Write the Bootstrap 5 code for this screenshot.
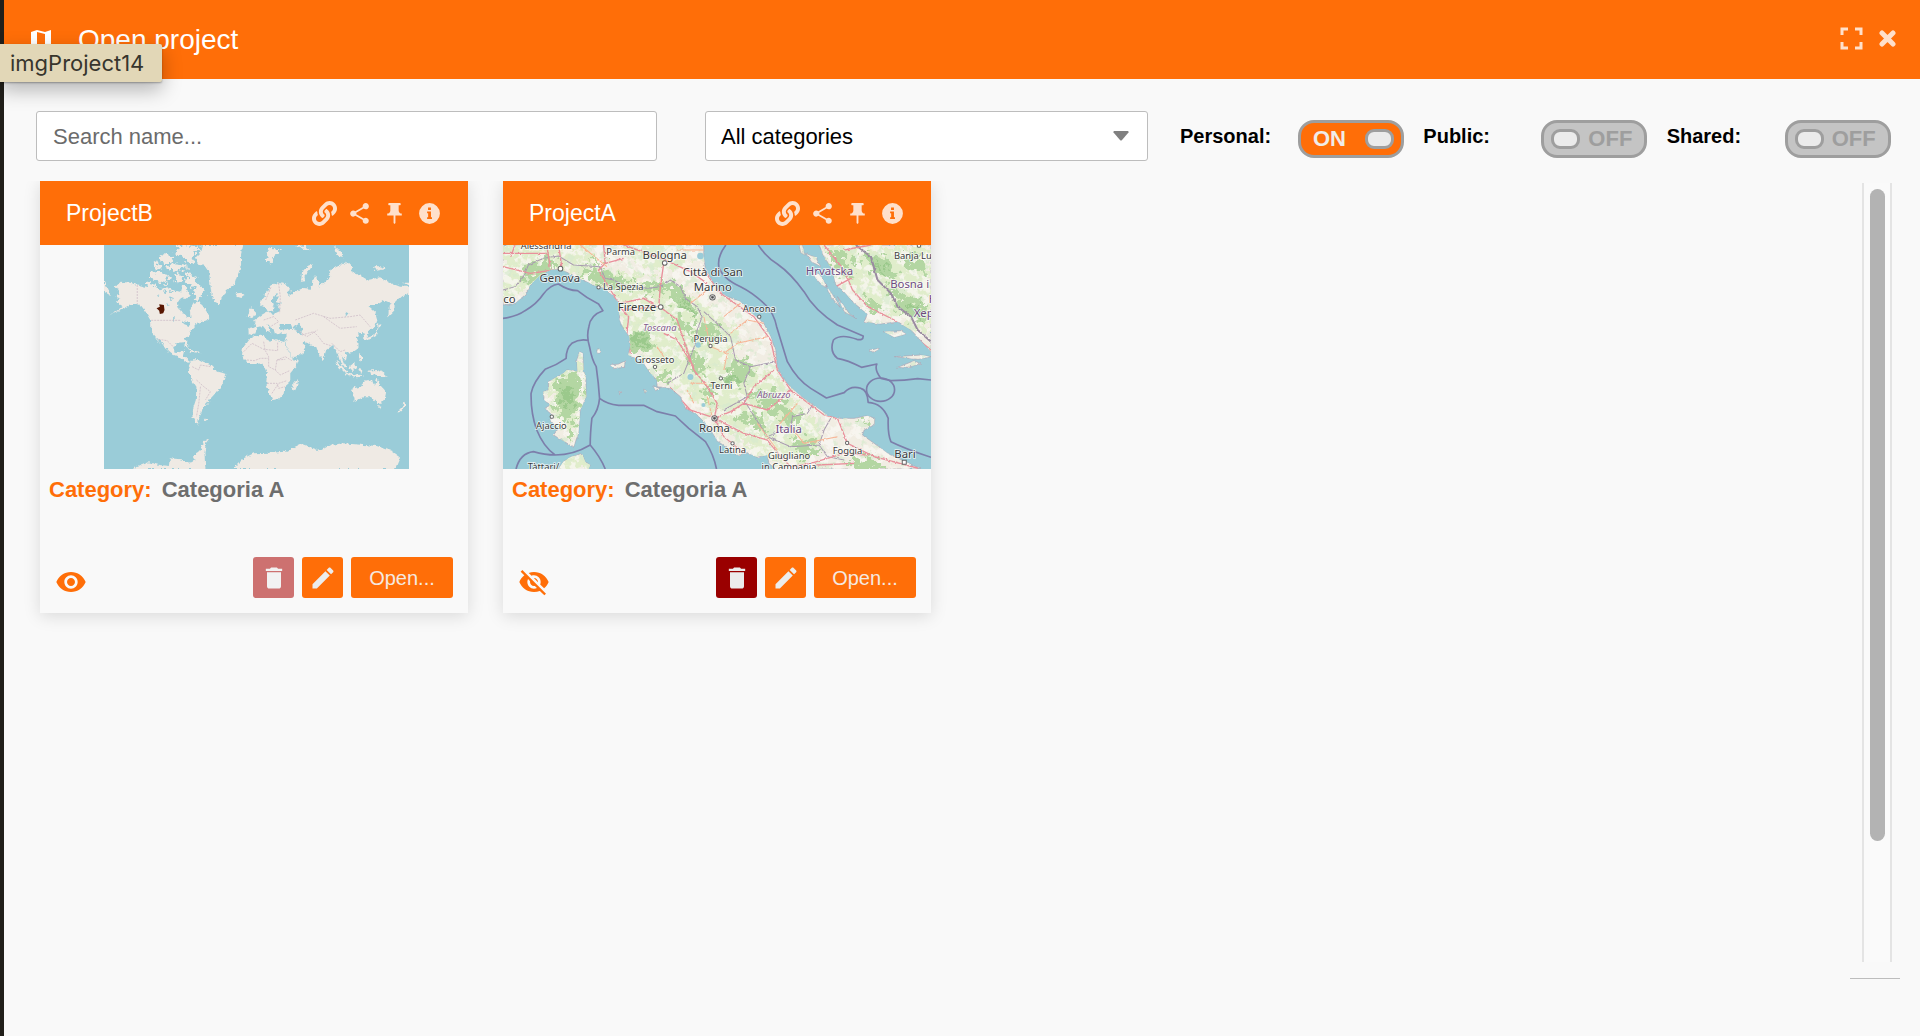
<!DOCTYPE html>
<html lang="en">
<head>
<meta charset="utf-8">
<meta name="viewport" content="width=device-width, initial-scale=1">
<title>Open project</title>
<link href="https://cdn.jsdelivr.net/npm/bootstrap@5.3.0/dist/css/bootstrap.min.css" rel="stylesheet">
<style>
:root{--brand:#ff6e08;--paper:#f9f9f9;--tint:#ffe0cb;--line:#bdbdbd}
body{font-family:"Liberation Sans",Arial,sans-serif;background:var(--paper);color:#000;border-left:4px solid #211f1a}
.dialog-head{background:var(--brand);height:79px;padding:0 24px 2px 27px;color:#fff}
.dialog-head h1{font-size:28px;line-height:32px;font-weight:400;margin-left:27px;padding-top:2px}
.plain-btn{border:0;background:none;padding:0;color:var(--tint);line-height:0}
.title-tip{left:0;top:44px;height:38px;width:162px;padding:0 10px;background:#e2d7b7;color:#37352d;font:400 22px/38px Inter,sans-serif;border-radius:0 2px 2px 0;box-shadow:0 8px 20px rgba(0,0,0,.28),0 1px 2px rgba(0,0,0,.3);white-space:nowrap;z-index:5}
.filters{padding:32px 10px 0 32px}
.filters .form-control,.filters .form-select{height:50px;font-size:22px;border:1px solid var(--line);border-radius:3px;padding:0 16px;color:#000;background-color:#fff}
.filters .form-control{padding-top:2px}
.filters .form-select{padding-left:15px}
.form-control::placeholder{color:#6b6b6b}
.filters .form-select{background-image:url("data:image/svg+xml,%3csvg xmlns='http://www.w3.org/2000/svg' viewBox='0 0 16 10'%3e%3cpath fill='%23808080' d='M1 0h14q1 .5.5 1.500L9 9q-1 1-2 0L.5 1.500Q0 .5 1 0z'/%3e%3c/svg%3e");background-size:16px 10px;background-position:right 18px center}
.f-search{flex:621 1 0;margin-right:48px}
.f-select{flex:443 1 0;margin-right:32px}
.f-toggles{flex:730 1 0}
.switch-item{flex:1 1 0;cursor:pointer}
.switch-name{width:118px;font-size:20px;line-height:24px;font-weight:700}
.pill{width:106px;height:38px;margin-top:6px;border:3px solid #9e9e9e;border-radius:16px;background:#c4c4c4;color:#9e9e9e;font-size:22px;line-height:24px;font-weight:700;padding:0 12px 0 7px;display:flex;align-items:center;justify-content:space-between;flex-direction:row-reverse}
.pill i{width:29px;height:20px;border:3px solid #9e9e9e;border-radius:9px;background:#ebebeb}
.pill .txt-on{display:none}
input:checked+.pill{background:var(--brand);color:#f0ece9;flex-direction:row;padding:0 7px 0 12px}
input:checked+.pill .txt-on{display:inline}
input:checked+.pill .txt-off{display:none}
input:focus-visible+.pill{outline:2px solid #333}
.results{margin-top:20px;overflow:hidden;padding-left:36px}
.card-list{gap:35px}
.project{width:428px;background:var(--paper);box-shadow:0 3px 16px rgba(0,0,0,.13)}
.project-head{height:64px;padding:0 26px;background:var(--brand);color:#fff}
.project-head h2{font-size:23px;line-height:28px;font-weight:400}
.icon-row{gap:10px}
.project-map{height:224px}
.project-map svg{display:block;height:224px}
.project-cat{font-size:22px;line-height:28px;font-weight:700;padding:7px 9px 5px;color:#6e6e6e;gap:10px}
.project-cat b{color:var(--brand)}
.project-foot{margin-top:48px;padding:0 15px;height:56px}
.project-foot .eye{color:var(--brand);margin-top:9px}
.sq{width:41px;height:41px;border:0;border-radius:3px;padding:0;color:#ececec;background:var(--brand);line-height:0}
.sq-del{background:#9a0000}
.sq-del:disabled{background:#cd7170;color:#f2f2f2}
.btn-open{width:102px;height:41px;border:0;border-radius:3px;background:var(--brand);color:#f5e9e0;font-size:20px;line-height:24px}
.rail{width:50px;margin-right:20px;border-bottom:1px solid var(--line);padding:2px 8px 16px 12px}
.rail-track{border:solid #e4e4e4;border-width:0 2px;background:#fafafa;padding:6px 5px 6px 6px}
.rail-thumb{height:85%;background:#b3b3b3;border-radius:8px}
.bottom-gap{height:57px}
.place text{font-family:"Noto Sans",sans-serif;fill:#3a3a3a;stroke:#fff;stroke-width:5px;stroke-opacity:.75;paint-order:stroke;text-anchor:middle}
.place .t9{font-size:28px}.place .t11{font-size:34px}
.place .region{fill:#835a8c;font-style:italic}.place .nation{fill:#6d4a80}
</style>
<script src="https://cdn.jsdelivr.net/npm/bootstrap@5.3.0/dist/js/bootstrap.bundle.min.js"></script>
</head>
<body class="d-flex flex-column min-vh-100">
<svg width="0" height="0" class="position-absolute" aria-hidden="true">
<symbol id="i-link" viewBox="0 0 512 512"><path d="M326.612 185.391c59.747 59.809 58.927 155.698.36 214.59-.11.12-.24.25-.36.37l-67.2 67.2c-59.27 59.27-155.699 59.262-214.96 0-59.27-59.26-59.27-155.7 0-214.96l37.106-37.106c9.84-9.84 26.786-3.3 27.294 10.606.648 17.722 3.826 35.527 9.69 52.721 1.986 5.822.567 12.262-3.783 16.612l-13.087 13.087c-28.026 28.026-28.905 73.66-1.155 101.96 28.024 28.579 74.086 28.749 102.325.51l67.2-67.19c28.191-28.191 28.073-73.757 0-101.83-3.701-3.694-7.429-6.564-10.341-8.569a16.037 16.037 0 0 1-6.947-12.606c-.396-10.567 3.348-21.456 11.698-29.806l21.054-21.055c5.521-5.521 14.182-6.199 20.584-1.731a152.482 152.482 0 0 1 20.522 17.197zM467.547 44.449c-59.261-59.262-155.69-59.27-214.96 0l-67.2 67.2c-.12.12-.25.25-.36.37-58.566 58.892-59.387 154.781.36 214.59a152.454 152.454 0 0 0 20.521 17.196c6.402 4.468 15.064 3.789 20.584-1.731l21.054-21.055c8.35-8.35 12.094-19.239 11.698-29.806a16.037 16.037 0 0 0-6.947-12.606c-2.912-2.005-6.64-4.875-10.341-8.569-28.073-28.073-28.191-73.639 0-101.83l67.2-67.19c28.239-28.239 74.3-28.069 102.325.51 27.75 28.3 26.872 73.934-1.155 101.96l-13.087 13.087c-4.35 4.35-5.769 10.79-3.783 16.612 5.864 17.194 9.042 34.999 9.69 52.721.509 13.906 17.454 20.446 27.294 10.606l37.106-37.106c59.271-59.259 59.271-155.699.001-214.959z"/></symbol>
<symbol id="i-share" viewBox="0 0 24 24"><path d="M18 16.080c-.76 0-1.440.3-1.960.77L8.910 12.700c.05-.23.09-.46.09-.7s-.04-.47-.09-.7l7.050-4.110c.54.5 1.250.81 2.040.81 1.660 0 3-1.340 3-3s-1.340-3-3-3-3 1.340-3 3c0 .24.04.47.09.7L8.040 9.810C7.500 9.310 6.790 9 6 9c-1.660 0-3 1.340-3 3s1.340 3 3 3c.79 0 1.500-.31 2.040-.81l7.120 4.160c-.05.21-.08.43-.08.65 0 1.610 1.310 2.920 2.920 2.920s2.920-1.310 2.920-2.920-1.310-2.920-2.920-2.920z"/></symbol>
<symbol id="i-pin" viewBox="0 0 24 24"><path d="M16 9V4h1c.55 0 1-.45 1-1s-.45-1-1-1H7c-.55 0-1 .45-1 1s.45 1 1 1h1v5c0 1.660-1.340 3-3 3v2h6.100v7l.9 1 .9-1v-7H19v-2c-1.660 0-3-1.340-3-3z"/></symbol>
<symbol id="i-info" viewBox="0 0 24 24"><path fill-rule="evenodd" d="M12 2a10 10 0 1 0 0 20 10 10 0 0 0 0-20zM10.600 6.200h2.800v2.500h-2.800zM9.700 10h3.700v5.500h1V17.300H9.700v-1.800h1v-3.700h-1z"/></symbol>
<symbol id="i-trash" viewBox="0 0 24 24"><path d="M6 19c0 1.100.9 2 2 2h8c1.100 0 2-.9 2-2V7H6v12zM19 4h-3.500l-1-1h-5l-1 1H5v2h14V4z"/></symbol>
<symbol id="i-edit" viewBox="0 0 24 24"><path d="M3 17.250V21h3.750L17.810 9.940l-3.750-3.750L3 17.250zM20.710 7.040c.39-.39.39-1.020 0-1.410l-2.340-2.340c-.39-.39-1.020-.39-1.410 0l-1.830 1.830 3.750 3.750 1.830-1.830z"/></symbol>
<symbol id="i-eye" viewBox="0 0 24 24"><path d="M12 4.500C7 4.500 2.730 7.610 1 12c1.730 4.390 6 7.500 11 7.500s9.270-3.110 11-7.500c-1.730-4.390-6-7.500-11-7.500zM12 17c-2.760 0-5-2.240-5-5s2.240-5 5-5 5 2.240 5 5-2.240 5-5 5zm0-8c-1.660 0-3 1.340-3 3s1.340 3 3 3 3-1.340 3-3-1.340-3-3-3z"/></symbol>
<symbol id="i-eyeoff" viewBox="0 0 24 24"><path d="M12 7c2.760 0 5 2.240 5 5 0 .65-.13 1.260-.36 1.830l2.920 2.920c1.510-1.260 2.700-2.890 3.430-4.750-1.730-4.390-6-7.500-11-7.500-1.400 0-2.740.25-3.980.7l2.160 2.160C10.740 7.130 11.350 7 12 7zM2 4.270l2.280 2.280.46.46C3.080 8.300 1.780 10.020 1 12c1.730 4.390 6 7.500 11 7.500 1.550 0 3.030-.3 4.380-.84l.42.42L19.730 22 21 20.730 3.270 3 2 4.270zM7.530 9.800l1.550 1.550c-.05.21-.08.43-.08.65 0 1.660 1.340 3 3 3 .22 0 .44-.03.65-.08l1.550 1.550c-.67.33-1.410.53-2.200.53-2.760 0-5-2.240-5-5 0-.79.2-1.530.53-2.200zm4.310-.78l3.150 3.150.02-.16c0-1.660-1.340-3-3-3l-.17.01z"/></symbol>
</svg>

<header class="dialog-head d-flex align-items-center">
  <svg width="20" height="20" viewBox="0 0 20 20" fill="#fff" aria-hidden="true"><path d="M0 3l6-2v16l-6 2zM14 3l6-2v16l-6 2z"/><path d="M6 1l8 2v2L6 3zM6 15l8 2v2l-8-2z"/></svg>
  <h1 class="mb-0 me-auto">Open project</h1>
  <button class="plain-btn me-3" type="button" aria-label="Full screen"><svg width="23" height="23" viewBox="0 0 23 23" fill="none" stroke="currentColor" stroke-width="3"><path d="M2 8V2h6M15 2h6v6M21 15v6h-6M8 21H2v-6"/></svg></button>
  <button class="plain-btn" type="button" aria-label="Close"><svg width="17" height="17" viewBox="0 0 17 17" fill="none" stroke="currentColor" stroke-width="5" stroke-linecap="round"><path d="M3 3l11 11M14 3L3 14"/></svg></button>
</header>
<div class="title-tip position-absolute" role="tooltip">imgProject14</div>

<form class="filters d-flex align-items-center">
  <div class="f-search"><input class="form-control" type="text" placeholder="Search name..." aria-label="Search name"></div>
  <div class="f-select"><select class="form-select" aria-label="Category"><option>All categories</option><option>Categoria A</option></select></div>
  <div class="f-toggles d-flex">
    <label class="switch-item d-flex align-items-center"><span class="switch-name">Personal:</span><input class="visually-hidden" type="checkbox" checked><span class="pill"><span class="txt-on">ON</span><span class="txt-off">OFF</span><i></i></span></label>
    <label class="switch-item d-flex align-items-center"><span class="switch-name">Public:</span><input class="visually-hidden" type="checkbox"><span class="pill"><span class="txt-on">ON</span><span class="txt-off">OFF</span><i></i></span></label>
    <label class="switch-item d-flex align-items-center"><span class="switch-name">Shared:</span><input class="visually-hidden" type="checkbox"><span class="pill"><span class="txt-on">ON</span><span class="txt-off">OFF</span><i></i></span></label>
  </div>
</form>

<main class="results d-flex flex-grow-1">
  <div class="card-list d-flex flex-wrap align-content-start flex-grow-1">
    <article class="project align-self-start">
      <div class="project-head d-flex align-items-center">
        <h2 class="mb-0 me-auto">ProjectB</h2>
        <div class="icon-row d-flex">
          <button class="plain-btn" type="button" aria-label="Link"><svg width="25" height="25" fill="currentColor"><use href="#i-link"/></svg></button>
          <button class="plain-btn" type="button" aria-label="Share"><svg width="25" height="25" fill="currentColor"><use href="#i-share"/></svg></button>
          <button class="plain-btn" type="button" aria-label="Pin"><svg width="25" height="25" fill="currentColor"><use href="#i-pin"/></svg></button>
          <button class="plain-btn" type="button" aria-label="Info"><svg width="25" height="25" fill="currentColor"><use href="#i-info"/></svg></button>
        </div>
      </div>
      <div class="project-map d-flex justify-content-center ps-1">
        <svg width="305" viewBox="220 225 917 672" preserveAspectRatio="none" role="img" aria-label="World map">
          <defs><filter id="rough" x="-5%" y="-5%" width="110%" height="110%"><feTurbulence type="fractalNoise" baseFrequency=".09" numOctaves="3" seed="4" result="n"/><feDisplacementMap in="SourceGraphic" in2="n" scale="14" xChannelSelector="R" yChannelSelector="G"/></filter>
          <filter id="isles" x="-5%" y="-5%" width="110%" height="110%"><feTurbulence type="fractalNoise" baseFrequency=".07" numOctaves="3" seed="9" result="n"/><feDisplacementMap in="SourceGraphic" in2="n" scale="36" xChannelSelector="R" yChannelSelector="G"/></filter></defs>
          <path fill="#9accd8" d="M220 225h917v672H220z"/>
          <g fill="#efeae4" filter="url(#rough)">
            <path d="M255 350L270 335 298 338 322 344 345 350 365 343 385 358 410 352 430 362 452 365 455 345 468 345 472 368 485 375 470 385 452 382 440 400 440 415 458 425 470 442 480 440 478 420 488 400 500 395 515 405 532 430 540 445 525 452 500 458 492 470 482 480 478 497 462 505 470 515 474 528 468 532 460 517 440 518 428 530 432 548 448 550 452 542 464 542 460 558 478 572 484 576 472 578 448 562 425 553 412 542 400 525 384 505 380 505 392 528 386 518 374 498 362 485 362 455 345 425 332 407 318 402 300 402 285 412 262 424 235 436 262 420 276 408 258 398 266 384 254 380 268 372z"/>
            <path d="M484 568L505 568 520 576 545 585 555 603 575 608 588 613 584 628 576 640 572 655 560 662 550 675 538 688 530 702 516 712 514 728 506 742 500 750 504 764 494 760 486 742 488 715 496 690 498 650 486 632 474 610 472 598 478 584z"/>
            <path d="M515 225L638 225 632 250 632 285 628 300 618 325 612 345 590 360 575 380 568 403 553 395 543 370 540 345 536 305 525 288 503 284 496 262 508 250z"/>
            <path d="M620 370L636 368 642 376 630 384 618 380zM812 335L816 305 832 288 852 280 838 300 822 318 826 334zM912 226L925 238 942 262 925 258 915 245zM1025 292L1045 288 1070 296 1040 302zM220 330L238 368 244 376 220 362zM1137 338L1115 338 1137 345z"/>
            <path d="M690 408L690 392 704 376 720 350 740 337 770 345 782 360 770 370 775 378 800 362 820 354 840 356 848 345 850 320 862 320 866 350 880 340 900 320 895 302 920 290 950 275 966 290 960 305 985 315 1010 330 1050 322 1080 338 1110 350 1137 350 1137 372 1112 380 1095 395 1092 425 1075 442 1076 415 1085 398 1060 392 1040 405 1012 405 1035 425 1042 450 1035 470 1018 480 1010 500 1014 508 1004 510 1000 490 984 488 988 498 978 502 985 518 985 535 970 545 955 548 945 545 950 560 948 572 935 560 930 548 942 580 950 592 944 592 928 570 922 548 914 535 905 528 888 540 882 560 878 574 868 558 858 530 845 524 820 516 826 540 800 562 788 564 772 535 764 515 770 505 768 492 750 490 745 482 760 478 785 480 782 468 765 462 750 475 748 490 735 495 730 478 712 462 716 478 722 490 712 486 698 468 682 472 676 488 662 494 655 492 654 474 672 470 678 460 668 452 680 445 692 436 705 428 712 428 730 432 748 424 750 412 738 408 752 400 738 396 732 405 728 420 714 428 706 412z"/>
            <path d="M652 440L660 412 670 420 678 438 664 444zM662 502L690 494 704 496 708 508 722 515 735 508 762 516 768 530 784 558 790 572 806 568 798 588 780 610 780 635 764 650 760 672 745 688 726 690 716 665 708 640 710 610 702 590 695 580 675 582 656 582 640 566 635 555 638 532 650 518zM790 640L803 628 802 642 792 664 786 655zM768 510L780 520 796 554 822 544 826 534 812 526 796 515z"/>
            <path d="M966 656L990 650 1005 632 1025 628 1028 640 1036 644 1042 624 1050 648 1068 668 1064 686 1050 702 1036 696 1024 682 1002 682 974 692zM1044 708L1054 710 1050 718zM1120 692L1130 706 1112 726 1102 728 1118 712zM916 572L930 582 950 604 945 608 925 592zM955 592L972 578 978 590 966 604zM945 608L990 618 1000 620 980 622 950 614zM985 594L995 596 990 610zM1010 602L1038 600 1060 608 1072 620 1050 618 1025 612zM988 548L996 560 995 575 986 562zM1008 505L1032 496 1042 478 1042 462 1058 460 1046 470 1038 498 1015 510zM465 536L500 544 510 550 485 546zM520 746L532 748 524 754z"/>
            <path d="M305 897L355 877 385 885 415 888 418 865 450 868 480 878 496 870 485 862 510 842 518 815 538 803 526 820 522 850 525 897zM608 897L640 865 670 850 720 848 765 845 815 822 870 842 900 825 940 820 1000 825 1040 828 1085 843 1110 860 1095 897z"/>
          </g>
          <g fill="#efeae4" filter="url(#isles)">
            <path d="M440 225L500 228 505 240 492 250 488 275 470 278 458 262 440 255 434 240zM385 262L402 250 425 262 420 275 398 282zM366 284L382 276 392 294 372 296zM362 312L378 304 400 310 418 325 412 342 390 340 376 332 360 328zM430 312L450 310 452 335 440 340zM424 280L470 284 472 298 440 302 410 296zM462 312L490 318 500 335 518 352 524 370 505 378 512 392 490 385 484 370 498 362 482 345 466 340zM345 340L365 336 378 350 350 355zM705 245L730 236 746 240 735 256 722 280 710 270zM795 226L830 228 840 234 810 238z"/>
          </g>
          <g fill="#9accd8" filter="url(#rough)"><path d="M790 472L805 462 818 475 812 495 802 490zM748 462L780 462 784 474 750 476zM735 375L742 372 740 400 728 412 724 392zM455 452L480 460 476 468 460 462zM398 360l12 4-8 8zM415 378l14 6-10 6zM428 440l8 10-8 2zM380 372l10 3-8 5zM420 362l8 8-10-2zM410 400l8 6-8 2zM945 425l10 5-10 12 2-8z"/></g>
          <g fill="none" stroke="#c9b5c3" stroke-width="2" stroke-dasharray="6 3"><path d="M320 345V402M362 451H452M384 508L410 512 428 530M640 545L665 520 700 538 742 542V515M700 515L704 540 715 560 715 590 735 600 740 570 765 568M650 570L672 572 690 565 715 565M710 640H740L745 655 765 650M725 670L745 640 770 632M740 570L765 560 785 572M735 600L750 615 778 602M485 590L505 600 510 585 540 590M498 630L520 650 540 665 525 690M510 650L505 700 498 740M795 450L850 430 900 445 960 440 990 435 1020 470M880 440L930 475 980 470M815 495L850 485 865 500 880 520 905 528M800 480L830 500 862 480M700 450L730 440 745 455 720 470M745 340L750 380 748 430M722 352L706 390M905 520L930 545 945 540"/></g>
          <path fill="#581500" d="M378 415L388 410 386 403 400 405 402 420 398 430 388 432 386 422z"/>
        </svg>
      </div>
      <div class="project-cat d-flex"><b>Category:</b><span>Categoria A</span></div>
      <div class="project-foot d-flex align-items-start">
        <svg class="eye me-auto" width="32" height="32" fill="currentColor" role="img" aria-label="Visible"><use href="#i-eye"/></svg>
        <div class="d-flex gap-2">
          <button class="sq sq-del" type="button" aria-label="Delete" disabled><svg width="28" height="28" fill="currentColor"><use href="#i-trash"/></svg></button>
          <button class="sq" type="button" aria-label="Edit"><svg width="28" height="28" fill="currentColor"><use href="#i-edit"/></svg></button>
          <button class="btn-open" type="button">Open...</button>
        </div>
      </div>
    </article>

    <article class="project align-self-start">
      <div class="project-head d-flex align-items-center">
        <h2 class="mb-0 me-auto">ProjectA</h2>
        <div class="icon-row d-flex">
          <button class="plain-btn" type="button" aria-label="Link"><svg width="25" height="25" fill="currentColor"><use href="#i-link"/></svg></button>
          <button class="plain-btn" type="button" aria-label="Share"><svg width="25" height="25" fill="currentColor"><use href="#i-share"/></svg></button>
          <button class="plain-btn" type="button" aria-label="Pin"><svg width="25" height="25" fill="currentColor"><use href="#i-pin"/></svg></button>
          <button class="plain-btn" type="button" aria-label="Info"><svg width="25" height="25" fill="currentColor"><use href="#i-info"/></svg></button>
        </div>
      </div>
      <div class="project-map">
        <svg class="w-100" viewBox="39 225 1281 672" preserveAspectRatio="none" role="img" aria-label="Map of central Italy">
          <defs>
            <path id="land" d="M39 225V405L75 400 105 375 120 345 150 315 185 298 211 297 240 312 270 325 310 345 345 355 370 380 387 400 388 450 400 475 418 500 420 530 414 555 430 562 455 572 480 610 500 630 500 650 540 655 570 680 585 715 620 735 650 765 680 812 710 835 745 855 770 848 800 862 830 855 835 880 855 897H1290L1250 878 1190 850 1150 820 1115 795 1120 780 1150 765 1152 745 1130 737 1090 745 1040 745 1010 735 960 700 920 670 880 630 860 590 855 540 840 500 820 460 790 435 750 395 700 375 670 340 645 300 640 260V225zM268 545L278 550 280 600 287 625 288 680 270 720 265 790 250 832 215 810 190 795 205 775 180 750 185 735 165 715 180 705 162 690 160 665 175 660 175 635 220 610 230 600 262 605 260 570zM205 897L220 875 240 862 275 850 285 875 300 885 295 897zM985 225L1000 260 1025 300 1035 345 1060 365 1090 400 1130 432 1120 455 1170 462 1220 455 1260 480 1320 545V225zM360 585L385 582 405 572 402 592 370 596zM320 540l8-4 2 12-8 2zM490 650l20 4-14 8zM1180 485L1230 482 1245 492 1210 502zM1135 540l30-4-16 12zM1210 560L1290 555 1320 560 1280 568zM1220 592L1270 572 1290 582 1240 594zM925 225L935 225 942 255 930 248zM945 250L975 262 990 290 962 275zM960 300L985 312 1010 350 1000 350 975 325zM1005 345L1040 395 1048 412 1020 380zM1040 380L1075 430 1095 445 1060 425zM460 658l8 4-4 8zM386 664l6 2-4 5z"/>
            <clipPath id="landclip"><use href="#land"/></clipPath>
            <filter id="terrain" x="0" y="0" width="100%" height="100%"><feTurbulence type="fractalNoise" baseFrequency=".05" numOctaves="4" seed="11" result="n"/><feDisplacementMap in="SourceGraphic" in2="n" scale="75" xChannelSelector="R" yChannelSelector="G" result="d"/><feGaussianBlur in="d" stdDeviation="1"/></filter>
            <filter id="fields" x="0" y="0" width="100%" height="100%"><feTurbulence type="fractalNoise" baseFrequency=".035" numOctaves="4" seed="21"/><feColorMatrix values="0 0 0 0 .95 0 0 0 0 .93 0 0 0 0 .89 9 0 0 0 -4.400"/></filter>
            <filter id="woods" x="0" y="0" width="100%" height="100%"><feTurbulence type="fractalNoise" baseFrequency=".04" numOctaves="4" seed="5"/><feColorMatrix values="0 0 0 0 .68 0 0 0 0 .82 0 0 0 0 .62 0 9 0 0 -5.200"/></filter>
            <filter id="shore" x="-5%" y="-5%" width="110%" height="110%"><feTurbulence type="fractalNoise" baseFrequency=".1" numOctaves="2" seed="2" result="n"/><feDisplacementMap in="SourceGraphic" in2="n" scale="8" xChannelSelector="R" yChannelSelector="G"/></filter>
          </defs>
          <path fill="#9accd8" d="M39 225h1281v672H39z"/>
          <use href="#land" fill="#f1ede3" stroke="#a6a3b4" stroke-width="2" filter="url(#shore)"/>
          <g clip-path="url(#landclip)">
            <g filter="url(#terrain)">
              <path fill="#e0edcb" d="M39 225H280L350 300 520 330 640 400 740 470 740 560 790 590 850 600 900 680 960 740 1000 800 940 897 800 860 620 700 500 600 400 500 380 390 240 300 39 390zM990 225H1320V500L1180 430 1050 330zM180 620L280 560 280 700 250 820 180 720zM210 860h90v40h-90zM400 225L560 225 600 290 460 300z"/>
            </g>
            <path d="M39 225h1281v672H39z" filter="url(#fields)" opacity=".8"/>
            <path d="M39 225h1281v672H39z" filter="url(#woods)" opacity=".7"/>
            <g filter="url(#terrain)">
              <path fill="#b3d6a2" d="M90 290L180 262 205 290 110 350zM250 305L330 300 400 330 440 370 350 350zM300 265l35 5 10 25-30-15zM440 330L540 335 600 380 620 430 560 405 520 360 460 370zM405 490L470 480 490 530 440 550 420 540zM545 440l50 20 20 50-50-30zM620 460L670 450 690 510 640 520zM580 540l60 30 10 40-50-10zM480 600l60 10-10 30zM700 600L760 560 790 610 740 650zM630 640l40 20-10 50zM740 730L810 740 830 790 750 760zM770 680L850 660 880 700 930 740 920 770 840 720zM900 800L960 810 990 850 930 860zM1060 870l90-10 30 37h-90zM200 620L270 610 275 690 240 760 200 740 195 670zM215 770l40 5-10 40zM1000 240L1060 240 1100 330 1050 310zM1110 240L1200 270 1210 330 1150 310zM1190 340L1300 400 1310 470 1220 410zM1120 380l60 30-10 20-40-10zM1230 240l80 40v40l-60-30zM1100 755l40-10-5 20z"/>
              <path fill="#92c383" opacity=".7" d="M420 495l40 5 5 30-30-5zM560 390l40 20 10 30zM215 650l35 10-10 60-20-20zM1140 270l40 20 5 25zM700 620l30-10 20 25-30 5zM1250 390l40 30v30z"/>
            </g>
            <g fill="none" stroke="#a99bb0" stroke-width="3" filter="url(#shore)"><path d="M39 360L75 350 100 320 115 285 160 265 205 258 250 285 330 290 345 325 370 330 400 345 470 355 510 350 540 330 570 350 585 385 620 410 635 440 620 480 615 520 600 560 580 610 530 640M640 425L690 470 720 500 735 570 780 590 855 575M780 590L760 640 770 680 700 720M760 690L830 800 900 770 905 740 950 730 965 705M830 800L900 830 985 825 1000 780 1020 745M985 825L1010 860 1060 870"/><path stroke-width="6" stroke="#9a8ba1" d="M1095 225L1140 260 1160 330 1200 370 1220 410 1260 440 1280 480 1320 515"/></g>
            <g fill="none" stroke="#e9909c" stroke-width="4" filter="url(#shore)"><path d="M39 290L120 310 211 297M75 225L62 260M170 225L180 290M205 225L215 290M39 250H170M340 225L345 280 325 300 370 375 388 410 415 440 410 490 420 550M345 280L400 265M400 225L520 268 600 305 650 340M520 280L510 350 505 410 400 420M510 412L560 450 580 510 610 600 650 650 680 700 672 745M500 410L460 385 390 400M640 300L690 370 790 440 840 510 860 600 900 660 1000 735 1040 745 1070 820 1150 860 1290 897M610 590L560 510 520 490M672 745L720 725 760 700 790 650 850 600M672 745L760 790 830 810 870 860 900 890 960 880 1060 850 1130 855M585 715L660 740M540 655L600 720M672 745L700 800 760 850M760 700L830 720 855 700 900 660M980 885L1090 880M1000 225L1060 300 1085 360 1130 410 1210 450 1320 540M1060 240L1140 225M1035 350L1080 325"/></g>
            <g fill="none" stroke="#f7b596" stroke-width="3" filter="url(#shore)"><path d="M270 225L350 290M600 400L650 360M640 440L660 530 710 550 700 600M700 550L740 520 830 500M700 440L750 400M720 490L770 450 820 460M520 560L500 530M600 640L650 640M610 700L590 660M650 680L665 740M860 770L920 700M800 760L860 840M900 770L940 820 1040 800M640 240L560 240"/></g>
            <g fill="#9accd8"><circle cx="630" cy="258" r="10"/><circle cx="600" cy="621" r="9"/><circle cx="623" cy="525" r="8"/><circle cx="639" cy="705" r="6"/></g>
          </g>
          <g fill="none" stroke="#7c7fab" stroke-width="5" stroke-linejoin="round">
            <path d="M39 445Q80 440 105 422 140 402 160 372 180 345 205 342 235 362 262 362 290 385 325 402L338 422Q300 435 296 470 288 500 298 530 305 570 318 590 325 640 328 685 325 720 305 745 300 790 300 825 330 860 345 897M296 512Q270 505 245 520 228 535 228 565 200 585 165 598 130 635 123 670 122 730 140 780 160 830 195 855 250 855 300 825M78 897Q90 850 130 845 165 855 195 855M328 685Q350 702 385 706L460 706 500 725 555 738 595 775 645 815Q670 855 678 897M706 225Q680 260 685 290 695 325 750 350 790 370 825 405 850 430 858 470 870 510 890 575 920 630 960 655L1007 684 1060 668Q1080 645 1110 655 1130 660 1132 697 1175 700 1192 745 1190 790 1200 815 1240 835 1320 862M803 225Q830 265 860 282 900 310 940 365 970 420 1040 465L1117 498Q1118 512 1098 508 1050 490 1028 510 1015 545 1040 565 1070 570 1112 592L1158 582Q1150 600 1170 625L1200 632Q1240 632 1280 626L1320 630"/><ellipse cx="1169" cy="659" rx="42" ry="35"/>
          </g>
          <g fill="#fff" stroke="#666" stroke-width="3"><circle cx="211" cy="296" r="7"/><circle cx="523" cy="279" r="7"/><circle cx="511" cy="411" r="7"/><circle cx="325" cy="352" r="5"/><circle cx="806" cy="440" r="5"/><circle cx="660" cy="528" r="5"/><circle cx="494" cy="591" r="5"/><circle cx="691" cy="625" r="5"/><circle cx="185" cy="740" r="5"/><circle cx="726" cy="820" r="5"/><circle cx="1069" cy="819" r="5"/><path d="M1234 871h12v12h-12z"/><circle cx="1284" cy="227" r="5"/><circle cx="666" cy="382" r="8"/><circle cx="672" cy="745" r="8"/><g fill="#444"><circle cx="666" cy="382" r="3"/><circle cx="672" cy="745" r="3"/></g></g>
          <g class="place">
            <text class="t9" x="168" y="238">Alessandria</text><text class="t9" x="391" y="255">Parma</text><text class="t11" x="523" y="266">Bologna</text>
            <text class="t11" x="209" y="336">Genova</text><text class="t9" x="399" y="361">La Spezia</text><text class="t11" x="440" y="422">Firenze</text>
            <text class="t11" x="667" y="319">Città di San</text><text class="t11" x="667" y="363">Marino</text><text class="t9" x="806" y="427">Ancona</text>
            <text class="t9" x="660" y="517">Perugia</text><text class="t9" x="493" y="580">Grosseto</text><text class="t9" x="693" y="657">Terni</text>
            <text class="t11" x="672" y="786">Roma</text><text class="t9" x="726" y="850">Latina</text><text class="t9" x="895" y="866">Giugliano</text><text class="t9" x="895" y="899">in Campania</text>
            <text class="t9" x="1070" y="853">Foggia</text><text class="t11" x="1242" y="864">Bari</text><text class="t9" x="184" y="777">Ajaccio</text><text class="t9" x="160" y="899">Tàttari/</text>
            <text class="t9" x="1281" y="267">Banja Luka</text><text class="t11" x="58" y="400">co</text>
            <text class="t9 region" x="508" y="482">Toscana</text><text class="t9 region" x="850" y="685">Abruzzo</text>
            <text class="t11 nation" x="1016" y="315">Hrvatska</text><text class="t11 nation" x="894" y="790">Italia</text><text class="t11 nation" x="1256" y="355">Bosna i</text><text class="t11 nation" x="1326" y="398">H</text><text class="t11 nation" x="1298" y="441">Xep</text>
          </g>
        </svg>
      </div>
      <div class="project-cat d-flex"><b>Category:</b><span>Categoria A</span></div>
      <div class="project-foot d-flex align-items-start">
        <svg class="eye me-auto" width="32" height="32" fill="currentColor" role="img" aria-label="Hidden"><use href="#i-eyeoff"/></svg>
        <div class="d-flex gap-2">
          <button class="sq sq-del" type="button" aria-label="Delete"><svg width="28" height="28" fill="currentColor"><use href="#i-trash"/></svg></button>
          <button class="sq" type="button" aria-label="Edit"><svg width="28" height="28" fill="currentColor"><use href="#i-edit"/></svg></button>
          <button class="btn-open" type="button">Open...</button>
        </div>
      </div>
    </article>
  </div>
  <div class="rail d-flex flex-column flex-shrink-0"><div class="rail-track flex-grow-1 d-flex flex-column"><div class="rail-thumb"></div></div></div>
</main>
<div class="bottom-gap"></div>
</body>
</html>
